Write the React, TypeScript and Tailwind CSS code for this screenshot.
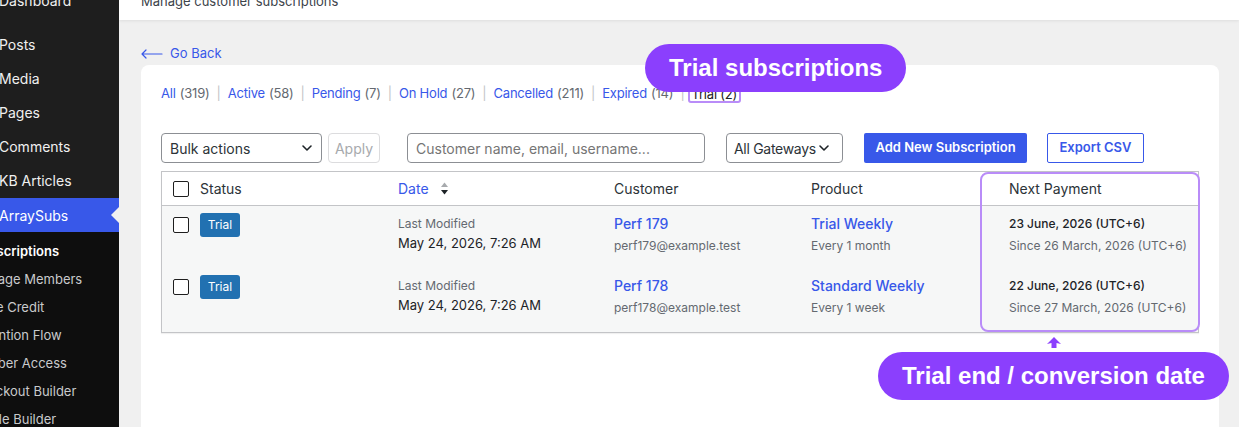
import React from 'react';

const menu = ['Posts', 'Media', 'Pages', 'Comments', 'KB Articles'];
const submenu = [
  { label: 'Manage Members', cls: 'ml-[-29px]' },
  { label: 'Store Credit', cls: 'ml-[-29px]' },
  { label: 'Retention Flow', cls: 'ml-[-29px]' },
  { label: 'Member Access', cls: 'ml-[-33px]' },
  { label: 'Checkout Builder', cls: 'ml-[-29px]' },
  { label: 'Bundle Builder', cls: 'ml-[-33px]' },
];

const filters = [
  { label: 'All', count: 319 },
  { label: 'Active', count: 58 },
  { label: 'Pending', count: 7 },
  { label: 'On Hold', count: 27 },
  { label: 'Cancelled', count: 211 },
  { label: 'Expired', count: 14 },
];

const rows = [
  {
    customer: 'Perf 179',
    email: 'perf179@example.test',
    product: 'Trial Weekly',
    cycle: 'Every 1 month',
    next: '23 June, 2026 (UTC+6)',
    since: 'Since 26 March, 2026 (UTC+6)',
  },
  {
    customer: 'Perf 178',
    email: 'perf178@example.test',
    product: 'Standard Weekly',
    cycle: 'Every 1 week',
    next: '22 June, 2026 (UTC+6)',
    since: 'Since 27 March, 2026 (UTC+6)',
  },
];

function Chevron({ className }: { className?: string }) {
  return (
    <svg className={className} width="12" height="12" viewBox="0 0 12 12" fill="none">
      <path d="M2 4l4 4 4-4" stroke="currentColor" strokeWidth="1.6" strokeLinecap="round" strokeLinejoin="round" />
    </svg>
  );
}

function Checkbox() {
  return <div className="w-4 h-4 border border-[#1e1e1e] rounded-[2px] bg-white" />;
}

function Sidebar() {
  return (
    <div className="w-[119px] shrink-0 h-full flex flex-col overflow-hidden text-[14px]">
      <div className="bg-[#1e1e1e] flex flex-col shrink-0 pb-[1px]">
        <div className="h-[34px] shrink-0 mt-[-17px] flex items-center text-[#f0f0f0] ml-[-1px]">Dashboard</div>
        <div className="h-[10px] shrink-0" />
        {menu.map((m) => (
          <div key={m} className="h-[34px] shrink-0 flex items-center text-[#f0f0f0] ml-[-1px] whitespace-nowrap">
            {m}
          </div>
        ))}
      </div>
      <div className="relative h-[34px] shrink-0 bg-[#3858e9] flex items-center text-white whitespace-nowrap">
        <span className="ml-[-1px]">ArraySubs</span>
        <span className="absolute right-0 top-[9px] w-0 h-0 border-y-[8px] border-y-transparent border-r-[8px] border-r-[#f0f0f0]" />
      </div>
      <div className="flex-1 bg-[#0e0e0e] pt-[6px] text-[13px]">
        <div className="h-[28px] flex items-center text-white font-semibold ml-[-28px] whitespace-nowrap">Subscriptions</div>
        {submenu.map((s) => (
          <div key={s.label} className={`h-[28px] flex items-center text-[#c9cacc] whitespace-nowrap ${s.cls}`}>
            {s.label}
          </div>
        ))}
      </div>
    </div>
  );
}

export default function App() {
  return (
    <div
      className="relative w-[1239px] h-[427px] overflow-hidden flex bg-[#f0f0f0]"
      style={{ fontFamily: 'Inter, "Noto Sans", sans-serif' }}
    >
      <Sidebar />

      <div className="flex-1 flex flex-col min-w-0 overflow-hidden">
        <div className="h-[20px] shrink-0 bg-white shadow-[0_1px_3px_rgba(0,0,0,0.08)] pl-[22px] overflow-hidden">
          <div className="text-[13px] text-[#3c434a] leading-[16px] mt-[-7px]">Manage customer subscriptions</div>
        </div>

        <div className="pl-[22px] pr-[20px] shrink-0">
          <div className="mt-[26px] h-[16px] flex items-center gap-[7px] text-[13px] text-[#3858e9]">
            <svg width="22" height="10" viewBox="0 0 22 10" fill="none">
              <path d="M21 5H1M5 1L1 5l4 4" stroke="#3858e9" strokeWidth="1.2" strokeLinecap="round" strokeLinejoin="round" />
            </svg>
            <span>Go Back</span>
          </div>

          <div className="mt-[3px] bg-white rounded-lg px-[20px] pt-[21px] h-[400px]">
            <div className="flex items-center h-[16px] text-[13px] tracking-[-0.2px] whitespace-nowrap">
              {filters.map((f) => (
                <React.Fragment key={f.label}>
                  <span className="text-[#3858e9]">{f.label}</span>
                  <span className="text-[#646970] ml-[4px]">({f.count})</span>
                  <span className="text-[#c3c4c7] mx-[7px]">|</span>
                </React.Fragment>
              ))}
              <span className="text-[#1d2327] border-2 border-[#b98cf8] rounded-[3px] px-[2px] leading-[13px] ml-[-4px]">
                Trial (2)
              </span>
            </div>

            <div className="mt-[31px] flex items-center h-[30px] text-[14px]">
              <div className="w-[161px] h-[30px] border border-[#8c8f94] rounded-[4px] flex items-center justify-between px-[8px] text-[#2c3338]">
                <span>Bulk actions</span>
                <Chevron className="text-[#1d2327]" />
              </div>
              <div className="ml-[6px] w-[52px] h-[30px] border border-[#dcdcde] rounded-[4px] flex items-center justify-center text-[#a7aaad]">
                Apply
              </div>
              <div className="ml-[27px] w-[298px] h-[30px] border border-[#8c8f94] rounded-[4px] flex items-center px-[8px] text-[#757575]">
                Customer name, email, username...
              </div>
              <div className="ml-[21px] w-[117px] h-[30px] border border-[#8c8f94] rounded-[4px] flex items-center pl-[7px] gap-[2px] text-[#2c3338] whitespace-nowrap tracking-[-0.3px]">
                <span>All Gateways</span>
                <Chevron className="text-[#1d2327] shrink-0" />
              </div>
              <div className="ml-[21px] w-[163px] h-[30px] bg-[#3858e9] rounded-[2px] flex items-center justify-center text-white text-[13px] font-semibold">
                Add New Subscription
              </div>
              <div className="ml-[20px] w-[97px] h-[30px] border border-[#3858e9] rounded-[2px] flex items-center justify-center text-[#3858e9] text-[13px] font-semibold">
                Export CSV
              </div>
            </div>

            <div className="relative mt-[8px] border border-[#c3c4c7] shadow-[0_1px_1px_rgba(0,0,0,0.06)]">
              <div className="grid grid-cols-[38px_198px_216px_197px_198px_1fr] h-[34px] items-center border-b border-[#c3c4c7] bg-white text-[14px] text-[#2c3338]">
                <div className="pl-[11px]"><Checkbox /></div>
                <div>Status</div>
                <div className="flex items-center gap-[11px] text-[#3858e9]">
                  <span>Date</span>
                  <svg width="9" height="13" viewBox="0 0 9 13">
                    <path d="M4.5 0.5L8 5H1z" fill="#a7aaad" />
                    <path d="M1 8h7l-3.5 4.5z" fill="#1d2327" />
                  </svg>
                </div>
                <div>Customer</div>
                <div>Product</div>
                <div>Next Payment</div>
              </div>

              {rows.map((r, i) => (
                <div
                  key={r.customer}
                  className={`grid grid-cols-[38px_198px_216px_197px_198px_1fr] bg-[#f6f7f7] pt-[9px] ${i === 0 ? 'h-[62px]' : 'h-[64px]'}`}
                >
                  <div className="pl-[11px] pt-[2px]"><Checkbox /></div>
                  <div>
                    <div className="mt-[-2px] w-[40px] h-[24px] bg-[#2271b1] rounded-[3px] flex items-center justify-center text-white text-[12px]">
                      Trial
                    </div>
                  </div>
                  <div>
                    <div className="text-[12px] leading-[18px] text-[#646970]">Last Modified</div>
                    <div className="text-[13px] leading-[18px] mt-[1px] text-[#1d2327]">May 24, 2026, 7:26 AM</div>
                  </div>
                  <div>
                    <div className="text-[14px] leading-[18px] font-medium text-[#3858e9]">{r.customer}</div>
                    <div className="text-[12px] leading-[18px] mt-[4px] text-[#646970]">{r.email}</div>
                  </div>
                  <div>
                    <div className="text-[14px] leading-[18px] font-medium text-[#3858e9]">{r.product}</div>
                    <div className="text-[12px] leading-[18px] mt-[4px] text-[#646970]">{r.cycle}</div>
                  </div>
                  <div>
                    <div className="text-[12px] leading-[18px] font-medium text-[#1d2327]">{r.next}</div>
                    <div className="text-[12px] leading-[18px] mt-[4px] text-[#646970]">{r.since}</div>
                  </div>
                </div>
              ))}

              <div className="absolute left-[818px] top-0 bottom-0 w-[220px] border-2 border-[#b98cf8] rounded-[8px]" />
            </div>
          </div>
        </div>
      </div>

      <div
        className="absolute left-[645px] top-[44px] h-[48px] px-[24px] rounded-full bg-[#8b3ffd] text-white text-[24px] font-bold flex items-center"
        style={{ fontFamily: '"Liberation Sans", Arial, sans-serif' }}
      >
        Trial subscriptions
      </div>

      <svg className="absolute left-[1046px] top-[337px]" width="16" height="12" viewBox="0 0 16 12">
        <path d="M8 0L15 7L10.5 6V11H5.5V6L1 7Z" fill="#8b3ffd" />
      </svg>

      <div
        className="absolute left-[878px] top-[352px] h-[48px] px-[24px] rounded-full bg-[#8b3ffd] text-white text-[24px] font-bold flex items-center"
        style={{ fontFamily: '"Liberation Sans", Arial, sans-serif' }}
      >
        Trial end / conversion date
      </div>
    </div>
  );
}
